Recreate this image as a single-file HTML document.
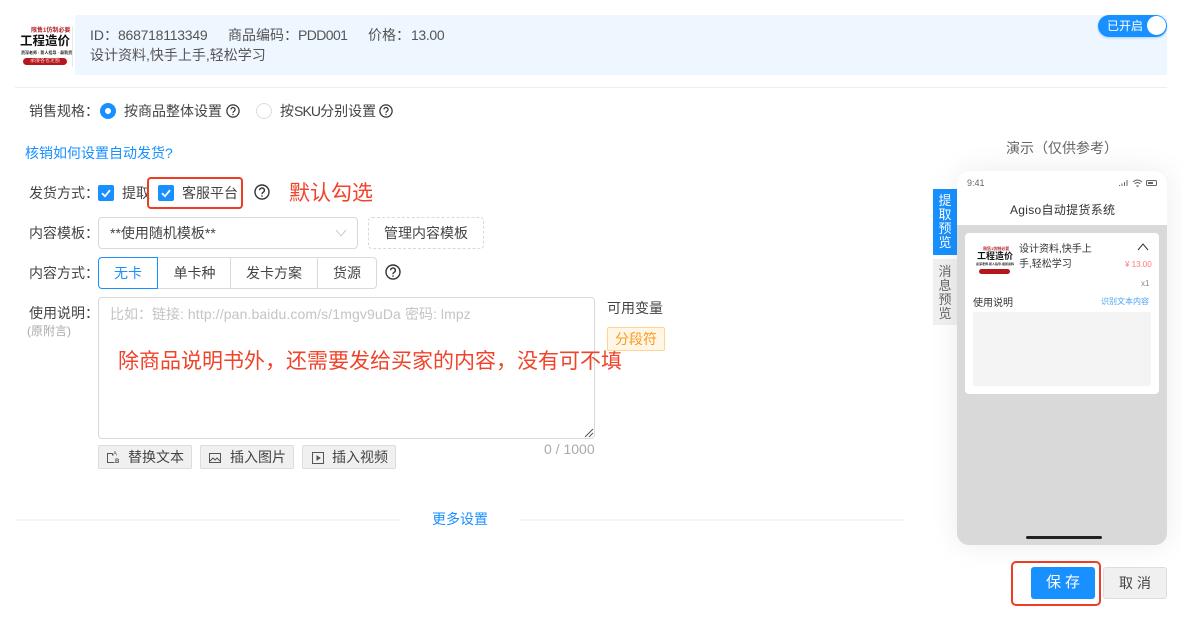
<!DOCTYPE html>
<html lang="zh"><head><meta charset="utf-8">
<style>
*{box-sizing:border-box}
html,body{margin:0;padding:0;background:#fff}
body{width:1182px;height:617px;position:relative;overflow:hidden;font-family:"Liberation Sans","Noto Sans CJK SC",sans-serif;font-size:14px;color:#444}
.a{position:absolute;white-space:nowrap;line-height:20px}
.box{position:absolute}
.q{position:absolute;width:16px;height:16px}
.q.s{width:14px;height:14px}
.cb{position:absolute;width:16px;height:16px;background:#1890ff;border-radius:2px}
.cb svg{position:absolute;left:0;top:0}
.btn{position:absolute;height:24px;top:445px;background:#f0f0f0;border:1px solid #ddd;border-radius:2px;font-size:14px;line-height:23px;color:#444;white-space:nowrap}
.btn svg{position:absolute;left:8px;top:4px}
.btn span{position:absolute;top:0}
.seg{position:absolute;top:257px;height:32px;border:1px solid #d9d9d9;text-align:center;line-height:30px;color:#444;background:#fff}
.red{color:#f0432a}
</style></head><body>

<!-- product header -->
<div class="box" style="left:75px;top:15px;width:1092px;height:60px;background:#eef6ff"></div>
<div class="box" style="left:20px;top:26px;width:53px;height:41px;background:#fff;overflow:hidden">
  <div class="a" style="left:11px;top:2px;font-size:6px;line-height:6px;color:#b3262c;font-weight:700">限售1仿制必要</div>
  <div class="a" style="left:0;top:8px;font-size:12.500px;line-height:15px;font-weight:700;color:#111">工程造价</div>
  <div class="a" style="left:1px;top:24px;font-size:4px;line-height:6px;color:#222;font-weight:700">资深老师 · 新人指导 · 最新资料</div>
  <div class="box" style="left:3px;top:32px;width:44px;height:7px;border-radius:4px;background:#b5171c;color:#f6c9c9;font-size:5px;line-height:7px;text-align:center;white-space:nowrap">承接各省定额</div>
</div>
<div class="box" style="left:72px;top:26px;width:1px;height:41px;background:#e8e8e8"></div>
<div class="a" style="left:90px;top:25px;color:#555">ID：<span style="letter-spacing:-.25px">868718113349</span></div>
<div class="a" style="left:228px;top:25px;color:#555">商品编码：<span style="letter-spacing:-.6px">PDD001</span></div>
<div class="a" style="left:368px;top:25px;color:#555">价格：<span style="letter-spacing:-.35px;margin-left:1px">13.00</span></div>
<div class="a" style="left:90px;top:45px;color:#555">设计资料,快手上手,轻松学习</div>

<!-- switch -->
<div class="box" style="left:1098px;top:15px;width:69px;height:22px;border-radius:11px;background:#1890ff;box-shadow:0 1px 2px rgba(24,144,255,.35)"></div>
<div class="a" style="left:1107px;top:16px;color:#fff;font-size:12px">已开启</div>
<div class="box" style="left:1147px;top:16px;width:19px;height:19px;border-radius:50%;background:#fff"></div>

<div class="box" style="left:15px;top:87px;width:1152px;height:1px;background:#eee"></div>

<!-- sales spec -->
<div class="a" style="left:29px;top:101px">销售规格：</div>
<div class="box" style="left:100px;top:103px;width:16px;height:16px;border-radius:50%;border:5px solid #1890ff;background:#fff"></div>
<div class="a" style="left:124px;top:101px">按商品整体设置</div>
<svg class="q s" style="left:226px;top:104px" viewBox="0 0 16 16" fill="none" stroke="#333" stroke-width="1.400"><circle cx="8" cy="8" r="7"/><path d="M5.600 6.300a2.400 2.300 0 1 1 3.700 1.900c-.9.600-1.300 1-1.300 1.900"/><path d="M8 11.300v1.400"/></svg>
<div class="box" style="left:256px;top:103px;width:16px;height:16px;border-radius:50%;border:1px solid #ddd;background:#fff"></div>
<div class="a" style="left:280px;top:101px">按<span style="letter-spacing:-.9px">SKU</span>分别设置</div>
<svg class="q s" style="left:379px;top:104px" viewBox="0 0 16 16" fill="none" stroke="#333" stroke-width="1.400"><circle cx="8" cy="8" r="7"/><path d="M5.600 6.300a2.400 2.300 0 1 1 3.700 1.900c-.9.600-1.300 1-1.300 1.900"/><path d="M8 11.300v1.400"/></svg>

<div class="a" style="left:25px;top:143px;color:#1890ff">核销如何设置自动发货?</div>

<!-- delivery -->
<div class="a" style="left:29px;top:183px">发货方式：</div>
<div class="cb" style="left:98px;top:185px"><svg width="16" height="16"><path d="M4 8.200l3 3 5-6" fill="none" stroke="#fff" stroke-width="1.800"/></svg></div>
<div class="a" style="left:122px;top:183px">提取</div>
<div class="cb" style="left:158px;top:185px"><svg width="16" height="16"><path d="M4 8.200l3 3 5-6" fill="none" stroke="#fff" stroke-width="1.800"/></svg></div>
<div class="a" style="left:182px;top:183px">客服平台</div>
<div class="box" style="left:147px;top:177px;width:96px;height:32px;border:2px solid #ee3d23;border-radius:4px"></div>
<svg class="q" style="left:254px;top:184px" viewBox="0 0 16 16" fill="none" stroke="#333" stroke-width="1.400"><circle cx="8" cy="8" r="7"/><path d="M5.600 6.300a2.400 2.300 0 1 1 3.700 1.900c-.9.600-1.300 1-1.300 1.900"/><path d="M8 11.300v1.400"/></svg>
<div class="a red" style="left:289px;top:182px;font-size:21px;line-height:24px">默认勾选</div>

<!-- template -->
<div class="a" style="left:29px;top:223px">内容模板：</div>
<div class="box" style="left:98px;top:217px;width:260px;height:32px;border:1px solid #d9d9d9;border-radius:4px"></div>
<div class="a" style="left:110px;top:223px">**使用随机模板**</div>
<svg class="box" style="left:334px;top:227px" width="14" height="12"><path d="M2 3l5 6 5-6" fill="none" stroke="#ccc" stroke-width="1"/></svg>
<div class="box" style="left:368px;top:217px;width:116px;height:32px;border:1px dashed #d9d9d9;border-radius:4px"></div>
<div class="a" style="left:384px;top:223px">管理内容模板</div>

<!-- content mode -->
<div class="a" style="left:29px;top:263px">内容方式：</div>
<div class="seg" style="left:144px;width:87px"><span style="position:relative;left:7px">单卡种</span></div>
<div class="seg" style="left:230px;width:88px">发卡方案</div>
<div class="seg" style="left:317px;width:60px;border-radius:0 4px 4px 0">货源</div>
<div class="seg" style="left:98px;width:60px;border-color:#1890ff;color:#1890ff;border-radius:4px 0 0 4px">无卡</div>
<svg class="q" style="left:385px;top:264px" viewBox="0 0 16 16" fill="none" stroke="#333" stroke-width="1.400"><circle cx="8" cy="8" r="7"/><path d="M5.600 6.300a2.400 2.300 0 1 1 3.700 1.900c-.9.600-1.300 1-1.300 1.900"/><path d="M8 11.300v1.400"/></svg>

<!-- textarea -->
<div class="a" style="left:29px;top:303px">使用说明：</div>
<div class="a" style="left:27px;top:322px;font-size:12px;color:#aaa;line-height:18px">(原附言)</div>
<div class="box" style="left:98px;top:297px;width:497px;height:142px;border:1px solid #d9d9d9;border-radius:4px"></div>
<div class="a" style="left:110px;top:304px;color:#c4c4c4">比如：链接:<span style="letter-spacing:.12px"> http://pan.baidu.com/s/1mgv9uDa </span>密码:<span style="letter-spacing:.12px"> lmpz</span></div>
<svg class="box" style="left:584px;top:428px" width="10" height="10"><path d="M1 9L9 1M5 9l4-4" stroke="#555" stroke-width="1"/></svg>
<div class="a red" style="left:118px;top:349px;font-size:21px;line-height:26px">除商品说明书外，还需要发给买家的内容，没有可不填</div>
<div class="a" style="left:607px;top:298px;color:#444">可用变量</div>
<div class="box" style="left:607px;top:327px;width:58px;height:24px;background:#fff6e6;border:1px solid #ffd591;border-radius:2px;color:#fa9a1e;text-align:center;line-height:22px">分段符</div>
<div class="a" style="left:544px;top:439px;color:#aaa">0 / 1000</div>

<!-- tool buttons -->
<div class="btn" style="left:98px;width:94px">
  <svg width="16" height="16" fill="none" stroke="#555"><path d="M5.500 3.500H.5v9h5l2 0"/><path d="M5.500 3.500v2"/><text x="6" y="5.500" font-size="6" fill="#555" stroke="none" font-family="Liberation Sans">A</text><text x="8" y="13" font-size="6" font-weight="700" fill="#555" stroke="none" font-family="Liberation Sans">B</text></svg>
  <span style="left:29px">替换文本</span></div>
<div class="btn" style="left:200px;width:94px">
  <svg width="16" height="16" fill="none" stroke="#555"><rect x=".5" y="3.500" width="11" height="9"/><path d="M1 11l3-3 2 2 2-2 3 3"/></svg>
  <span style="left:29px">插入图片</span></div>
<div class="btn" style="left:302px;width:94px">
  <svg width="16" height="16" fill="none" stroke="#555"><rect x="1.500" y="2.500" width="11" height="11"/><path d="M6 6l3 2-3 2z" fill="#555"/></svg>
  <span style="left:29px">插入视频</span></div>

<!-- more settings -->
<div class="box" style="left:15px;top:519px;width:385px;height:2px;background:#f5f5f5"></div>
<div class="box" style="left:520px;top:519px;width:384px;height:2px;background:#f5f5f5"></div>
<div class="a" style="left:432px;top:509px;color:#1890ff">更多设置</div>

<!-- preview -->
<div class="a" style="left:1006px;top:138px;color:#666">演示（仅供参考）</div>
<div class="box" style="left:933px;top:189px;width:24px;height:66px;background:#1890ff;color:#fff;font-size:13px;line-height:14px;text-align:center;padding-top:5px">提<br>取<br>预<br>览</div>
<div class="box" style="left:933px;top:259px;width:24px;height:66px;background:#f0f0f0;color:#666;font-size:13px;line-height:14px;text-align:center;padding-top:6px">消<br>息<br>预<br>览</div>
<div class="box" style="left:957px;top:171px;width:210px;height:374px;border-radius:12px;background:#d9d9d9;overflow:hidden;box-shadow:0 0 30px rgba(0,0,0,.08)">
  <div class="box" style="left:0;top:0;width:210px;height:54px;background:#fff"></div>
  <div class="a" style="left:10px;top:2px;font-size:9px;color:#666">9:41</div>
  <svg class="box" style="left:162px;top:5px" width="40" height="12"><path d="M.5 10V9M3 10V7.500M5.500 10V6M8 10V4" stroke="#666" fill="none"/><path d="M14 6q4.500-4 9 0M15.700 7.800q2.800-2.500 5.600 0M17.500 9.500l1 1 1-1" stroke="#666" fill="none"/><rect x="27.500" y="4.500" width="10" height="5" rx="1" stroke="#666" fill="none"/><rect x="29" y="6" width="5" height="2" fill="#666"/></svg>
  <div class="a" style="left:53px;top:29px;font-size:12px;letter-spacing:.3px;color:#333">Agiso自动提货系统</div>
  <div class="box" style="left:8px;top:62px;width:194px;height:161px;background:#fff;border-radius:4px"></div>
  <div class="box" style="left:19px;top:74px;width:38px;height:30px;overflow:hidden;background:#fff">
    <div class="a" style="left:7px;top:1px;font-size:4px;line-height:5px;color:#b3262c;font-weight:700">限售1仿制必要</div>
    <div class="a" style="left:1px;top:6px;font-size:9px;line-height:11px;font-weight:700;color:#111">工程造价</div>
    <div class="a" style="left:0;top:17px;font-size:3px;line-height:5px;color:#222;font-weight:700">资深老师·新人指导·最新资料</div>
    <div class="box" style="left:3px;top:24px;width:31px;height:5px;border-radius:3px;background:#b5171c"></div>
  </div>
  <div class="a" style="left:62px;top:71px;font-size:10px;line-height:15px;color:#333">设计资料,快手上<br>手,轻松学习</div>
  <svg class="box" style="left:179px;top:71px" width="14" height="10"><path d="M2 8l5-6 5 6" fill="none" stroke="#333" stroke-width="1"/></svg>
  <div class="a" style="left:168px;top:84px;font-size:8px;color:#f77">¥ 13.00</div>
  <div class="a" style="left:184px;top:103px;font-size:8px;color:#888">x1</div>
  <div class="a" style="left:16px;top:123px;font-size:10px;color:#333">使用说明</div>
  <div class="a" style="left:144px;top:121px;font-size:8px;color:#4aa3f5">识别文本内容</div>
  <div class="box" style="left:16px;top:141px;width:178px;height:74px;background:#f4f4f4;border-radius:2px"></div>
  <div class="box" style="left:69px;top:365px;width:76px;height:3px;border-radius:2px;background:#222"></div>
</div>

<!-- footer buttons -->
<div class="box" style="left:1031px;top:567px;width:64px;height:32px;background:#1890ff;border-radius:3px;color:#fff;text-align:center;line-height:32px;letter-spacing:4px;font-size:15px;padding-left:4px">保存</div>
<div class="box" style="left:1103px;top:567px;width:64px;height:32px;background:#f0f0f0;border:1px solid #ddd;border-radius:3px;color:#444;text-align:center;line-height:30px;letter-spacing:4px;font-size:14px;padding-left:4px">取消</div>
<div class="box" style="left:1011px;top:561px;width:90px;height:45px;border:2px solid #ee3d23;border-radius:5px"></div>

</body></html>
